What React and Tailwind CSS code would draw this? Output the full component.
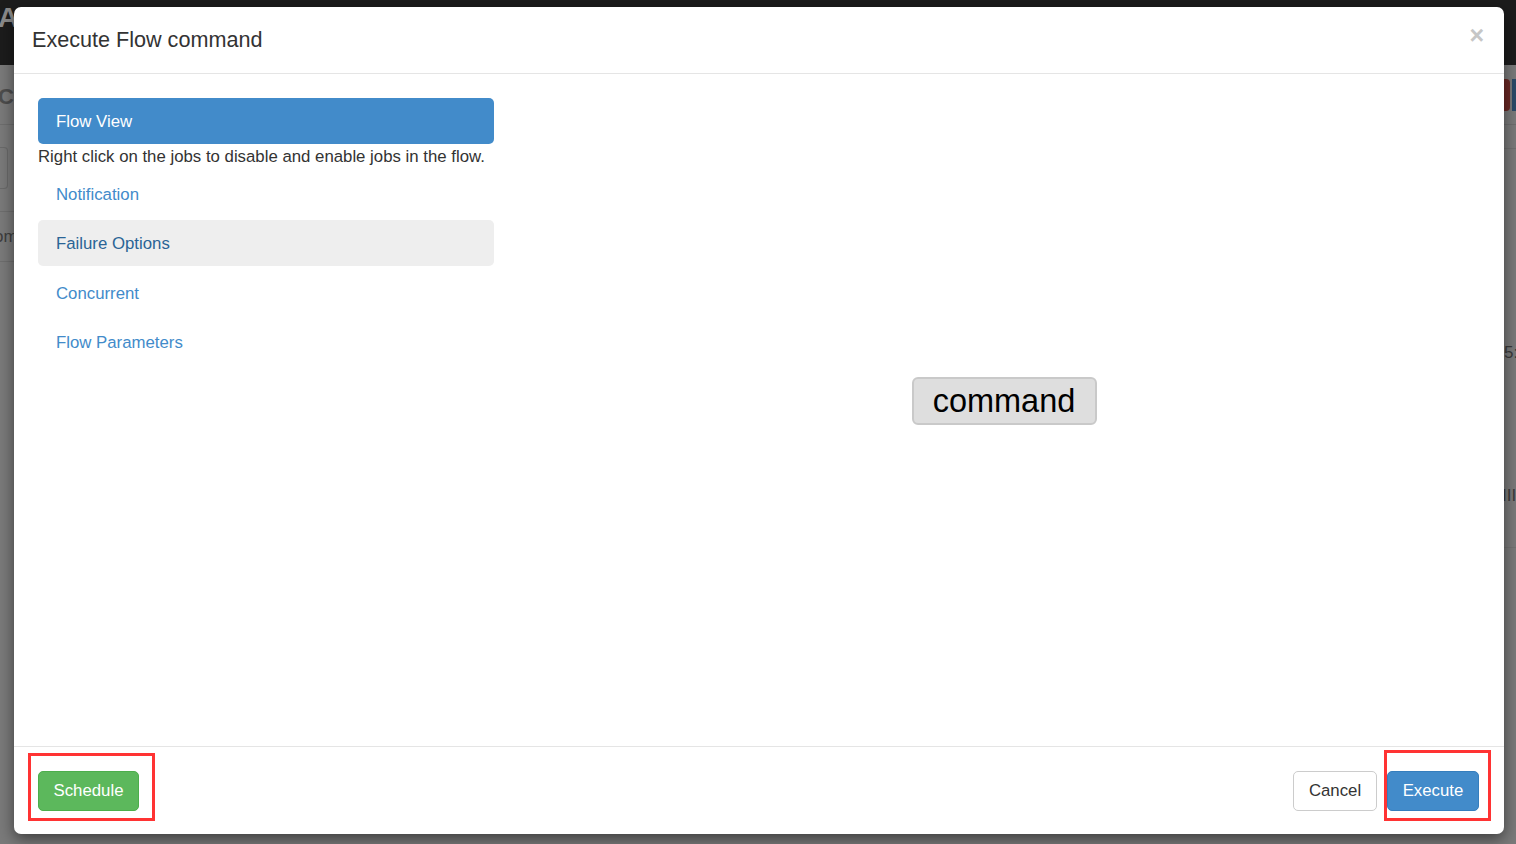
import React from "react";

const font = { fontFamily: '"Liberation Sans", Arial, sans-serif' };

function Background() {
  return (
    <div className="absolute inset-0 flex flex-col bg-[#7a7a7a]">
      <div className="h-[65px] bg-[#1c1c1c] flex items-start px-0 pt-[4px]">
        <span className="text-[28px] font-bold text-[#8a8a8a] leading-none -ml-[2px]">A</span>
      </div>
      <div className="flex-1 flex justify-between">
        <div className="w-[14px] flex flex-col">
          <div className="h-[60px] border-b border-[#6e6e6e] flex items-center pt-[4px]">
            <span className="text-[22px] font-bold text-[#4d4d4d] -ml-[2px]">C</span>
          </div>
          <div className="h-[87px] border-b border-[#6e6e6e] flex items-center">
            <div className="h-[42px] w-[8px] border border-[#6a6a6a] border-l-0 rounded-r" />
          </div>
          <div className="h-[50px] border-b border-[#6e6e6e] flex items-center overflow-hidden">
            <span className="text-[17px] text-[#3e3e3e] -ml-[6px]">om</span>
          </div>
        </div>
        <div className="w-[12px] flex flex-col">
          <div className="h-[60px] border-b border-[#6e6e6e] flex items-center gap-[2px]">
            <div className="h-[32px] w-[6px] bg-[#6b2824] rounded-r" />
            <div className="h-[32px] w-[4px] bg-[#2b4a68]" />
          </div>
          <div className="h-[24px] border-b border-[#707070]" />
          <div className="h-[216px] flex items-end overflow-hidden">
            <span className="text-[17px] text-[#3a3a3a]">5:</span>
          </div>
          <div className="h-[143px] flex items-end overflow-hidden">
            <span className="text-[17px] text-[#3a3a3a] -ml-[2px]">III</span>
          </div>
          <div className="h-[40px] border-b border-[#727272]" />
        </div>
      </div>
    </div>
  );
}

export default function App() {
  return (
    <div className="relative w-full h-[844px] overflow-hidden" style={font}>
      <Background />
      <div className="absolute left-[14px] top-[7px] w-[1490px] h-[827px] bg-white rounded-[7px] shadow-[0_5px_15px_rgba(0,0,0,0.5)] flex flex-col text-[#333333]">
        {/* header */}
        <div className="h-[67px] border-b border-[#e5e5e5] flex items-start justify-between pl-[18px] pr-[20px] pt-[17px]">
          <h4 className="text-[21.6px] leading-[31px] font-normal">Execute Flow command</h4>
          <button className="text-[25px] font-bold leading-none text-[#c6c6c6] mt-[-1px]">×</button>
        </div>
        {/* body */}
        <div className="flex-1 flex px-[24px] pt-[24px] pb-[24px]">
          <div className="w-[456px] flex flex-col text-[16.8px] leading-[24px]">
            <div className="h-[46px] rounded-[5px] bg-[#428bca] text-white px-[18px] pt-[1px] flex items-center">Flow View</div>
            <p className="mt-[1px] text-[#333333] leading-[24px]">Right click on the jobs to disable and enable jobs in the flow.</p>
            <div className="mt-[2px] h-[46px] rounded-[5px] px-[18px] pt-[1px] flex items-center text-[#428bca]">Notification</div>
            <div className="mt-[3px] h-[46px] rounded-[5px] px-[18px] pt-[1px] flex items-center bg-[#eeeeee] text-[#2a6496]">Failure Options</div>
            <div className="mt-[4px] h-[46px] rounded-[5px] px-[18px] pt-[1px] flex items-center text-[#428bca]">Concurrent</div>
            <div className="mt-[3px] h-[46px] rounded-[5px] px-[18px] pt-[1px] flex items-center text-[#428bca]">Flow Parameters</div>
          </div>
          <div className="flex-1 ml-[34px] flex items-center justify-center pb-[18px]">
            <div className="w-[185px] h-[48px] bg-[#dedede] border-2 border-[#c9c9c9] rounded-[6px] flex items-center justify-center text-[32.5px] text-black leading-none">
              command
            </div>
          </div>
        </div>
        {/* footer */}
        <div className="relative h-[88px] border-t border-[#e5e5e5] flex items-start justify-between px-[24px] pt-[24px] text-[16.8px]">
          <button className="h-[40px] w-[101px] rounded-[5px] bg-[#5cb85c] border border-[#4cae4c] text-white leading-[24px]">Schedule</button>
          <div className="flex gap-[10px] mr-[1px]">
            <button className="h-[40px] w-[84px] rounded-[5px] bg-white border border-[#cccccc] text-[#333333] leading-[24px]">Cancel</button>
            <button className="h-[40px] w-[92px] rounded-[5px] bg-[#428bca] border border-[#357ebd] text-white leading-[24px]">Execute</button>
          </div>
          <div className="absolute left-[14px] top-[6px] w-[127px] h-[68px] border-[3px] border-[#ff3333]" />
          <div className="absolute left-[1370px] top-[3px] w-[107px] h-[71px] border-[3px] border-[#ff3333]" />
        </div>
      </div>
    </div>
  );
}
